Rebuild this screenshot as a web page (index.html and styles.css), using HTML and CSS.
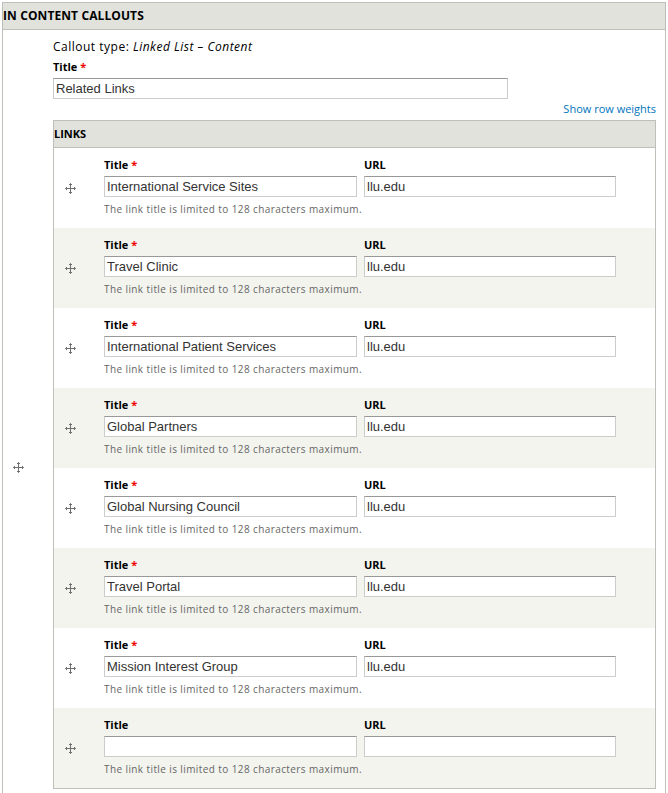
FILE: index.html
```html
<!DOCTYPE html>
<html>
<head>
<meta charset="utf-8">
<link rel="stylesheet" href="styles.css">
</head>
<body>
<div class="callouts">
  <div class="callouts-head">IN CONTENT CALLOUTS</div>
  <div class="callouts-body">
    <div class="outer-handle"><svg class="handle" viewBox="0 0 11 11"><path d="M5.5 0.5V10.5M0.5 5.5H10.5" /><path class="tip" d="M4 2L5.5 0.5L7 2M4 9L5.5 10.5L7 9M2 4L0.5 5.5L2 7M9 4L10.5 5.5L9 7"/></svg></div>
    <div class="content">
      <div class="type-line">Callout type: <em>Linked List – Content</em></div>
      <label class="lbl">Title <span class="req">*</span></label>
      <div class="input wide">Related Links</div>
      <div class="weights"><a href="#">Show row weights</a></div>
      <div class="links">
        <div class="links-head">LINKS</div>
        <div class="row">
          <div class="row-handle"><svg class="handle" viewBox="0 0 11 11"><path d="M5.5 0.5V10.5M0.5 5.5H10.5" /><path class="tip" d="M4 2L5.5 0.5L7 2M4 9L5.5 10.5L7 9M2 4L0.5 5.5L2 7M9 4L10.5 5.5L9 7"/></svg></div>
          <div class="fields">
            <div class="col"><div class="lbl">Title <span class="req">*</span></div><div class="input">International Service Sites</div><div class="desc">The link title is limited to 128 characters maximum.</div></div>
            <div class="col"><div class="lbl">URL</div><div class="input">llu.edu</div></div>
          </div>
        </div>
        <div class="row alt">
          <div class="row-handle"><svg class="handle" viewBox="0 0 11 11"><path d="M5.5 0.5V10.5M0.5 5.5H10.5" /><path class="tip" d="M4 2L5.5 0.5L7 2M4 9L5.5 10.5L7 9M2 4L0.5 5.5L2 7M9 4L10.5 5.5L9 7"/></svg></div>
          <div class="fields">
            <div class="col"><div class="lbl">Title <span class="req">*</span></div><div class="input">Travel Clinic</div><div class="desc">The link title is limited to 128 characters maximum.</div></div>
            <div class="col"><div class="lbl">URL</div><div class="input">llu.edu</div></div>
          </div>
        </div>
        <div class="row">
          <div class="row-handle"><svg class="handle" viewBox="0 0 11 11"><path d="M5.5 0.5V10.5M0.5 5.5H10.5" /><path class="tip" d="M4 2L5.5 0.5L7 2M4 9L5.5 10.5L7 9M2 4L0.5 5.5L2 7M9 4L10.5 5.5L9 7"/></svg></div>
          <div class="fields">
            <div class="col"><div class="lbl">Title <span class="req">*</span></div><div class="input">International Patient Services</div><div class="desc">The link title is limited to 128 characters maximum.</div></div>
            <div class="col"><div class="lbl">URL</div><div class="input">llu.edu</div></div>
          </div>
        </div>
        <div class="row alt">
          <div class="row-handle"><svg class="handle" viewBox="0 0 11 11"><path d="M5.5 0.5V10.5M0.5 5.5H10.5" /><path class="tip" d="M4 2L5.5 0.5L7 2M4 9L5.5 10.5L7 9M2 4L0.5 5.5L2 7M9 4L10.5 5.5L9 7"/></svg></div>
          <div class="fields">
            <div class="col"><div class="lbl">Title <span class="req">*</span></div><div class="input">Global Partners</div><div class="desc">The link title is limited to 128 characters maximum.</div></div>
            <div class="col"><div class="lbl">URL</div><div class="input">llu.edu</div></div>
          </div>
        </div>
        <div class="row">
          <div class="row-handle"><svg class="handle" viewBox="0 0 11 11"><path d="M5.5 0.5V10.5M0.5 5.5H10.5" /><path class="tip" d="M4 2L5.5 0.5L7 2M4 9L5.5 10.5L7 9M2 4L0.5 5.5L2 7M9 4L10.5 5.5L9 7"/></svg></div>
          <div class="fields">
            <div class="col"><div class="lbl">Title <span class="req">*</span></div><div class="input">Global Nursing Council</div><div class="desc">The link title is limited to 128 characters maximum.</div></div>
            <div class="col"><div class="lbl">URL</div><div class="input">llu.edu</div></div>
          </div>
        </div>
        <div class="row alt">
          <div class="row-handle"><svg class="handle" viewBox="0 0 11 11"><path d="M5.5 0.5V10.5M0.5 5.5H10.5" /><path class="tip" d="M4 2L5.5 0.5L7 2M4 9L5.5 10.5L7 9M2 4L0.5 5.5L2 7M9 4L10.5 5.5L9 7"/></svg></div>
          <div class="fields">
            <div class="col"><div class="lbl">Title <span class="req">*</span></div><div class="input">Travel Portal</div><div class="desc">The link title is limited to 128 characters maximum.</div></div>
            <div class="col"><div class="lbl">URL</div><div class="input">llu.edu</div></div>
          </div>
        </div>
        <div class="row">
          <div class="row-handle"><svg class="handle" viewBox="0 0 11 11"><path d="M5.5 0.5V10.5M0.5 5.5H10.5" /><path class="tip" d="M4 2L5.5 0.5L7 2M4 9L5.5 10.5L7 9M2 4L0.5 5.5L2 7M9 4L10.5 5.5L9 7"/></svg></div>
          <div class="fields">
            <div class="col"><div class="lbl">Title <span class="req">*</span></div><div class="input">Mission Interest Group</div><div class="desc">The link title is limited to 128 characters maximum.</div></div>
            <div class="col"><div class="lbl">URL</div><div class="input">llu.edu</div></div>
          </div>
        </div>
        <div class="row alt">
          <div class="row-handle"><svg class="handle" viewBox="0 0 11 11"><path d="M5.5 0.5V10.5M0.5 5.5H10.5" /><path class="tip" d="M4 2L5.5 0.5L7 2M4 9L5.5 10.5L7 9M2 4L0.5 5.5L2 7M9 4L10.5 5.5L9 7"/></svg></div>
          <div class="fields">
            <div class="col"><div class="lbl">Title</div><div class="input"></div><div class="desc">The link title is limited to 128 characters maximum.</div></div>
            <div class="col"><div class="lbl">URL</div><div class="input"></div></div>
          </div>
        </div>
      </div>
      <div class="after"></div>
    </div>
  </div>
</div>
</body>
</html>
```

FILE: styles.css
```css
html, body {
  margin: 0;
  padding: 0;
  background: #ffffff;
}
body {
  font-family: "Open Sans", "DejaVu Sans", sans-serif;
  color: #000;
}
.callouts {
  margin: 2px 0 0 2px;
  width: 664px;
  box-sizing: border-box;
  border: 1px solid #bebfb9;
}
.callouts-head {
  height: 26px;
  line-height: 26px;
  background: #e1e2dc;
  border-bottom: 1px solid #bebfb9;
  font-weight: bold;
  font-size: 12px;
  letter-spacing: 0.1px;
  padding-left: 0;
  color: #000;
}
.callouts-body {
  display: flex;
}
.outer-handle {
  width: 50px;
  flex: none;
  box-sizing: border-box;
  padding-left: 10px;
  display: flex;
  align-items: center;
}
.handle {
  width: 11px;
  height: 11px;
  display: block;
}
.handle path {
  fill: none;
  stroke: #6f6f6f;
  stroke-width: 1;
}
.content {
  width: 603px;
  padding-top: 10px;
}
.type-line {
  font-size: 12px;
  line-height: 14px;
  letter-spacing: 0.5px;
  color: #000;
}
.type-line em {
  font-style: italic;
}
.lbl {
  display: block;
  font-size: 11px;
  font-weight: bold;
  line-height: 14px;
  color: #000;
}
.content > .lbl {
  margin-top: 6px;
}
.req {
  color: #e00;
}
.input {
  box-sizing: border-box;
  height: 21px;
  border: 1px solid #ccc;
  border-top-color: #999;
  background: #fff;
  font-family: "Liberation Sans", Arial, sans-serif;
  font-size: 13px;
  line-height: 19px;
  padding-left: 2px;
  color: #333;
  margin-top: 4px;
  white-space: nowrap;
  overflow: hidden;
}
.input.wide {
  width: 455px;
}
.weights {
  text-align: right;
  font-size: 11px;
  line-height: 14px;
  margin-top: 3px;
}
.weights a {
  color: #0074bd;
  text-decoration: none;
}
.links {
  margin-top: 4px;
  border: 1px solid #bebfb9;
}
.links-head {
  height: 26px;
  line-height: 26px;
  background: #e1e2dc;
  border-bottom: 1px solid #bebfb9;
  font-weight: bold;
  font-size: 11px;
  padding-left: 0;
}
.row {
  display: flex;
  height: 80px;
  box-sizing: border-box;
  background: #fff;
}
.row.alt {
  background: #f3f4ee;
}
.row-handle {
  width: 50px;
  flex: none;
  box-sizing: border-box;
  padding-left: 11px;
  display: flex;
  align-items: center;
}
.fields {
  display: flex;
  gap: 7px;
  padding-top: 10px;
}
.col {
  width: 253px;
}
.col + .col {
  width: 252px;
}
.desc {
  font-size: 10px;
  line-height: 14px;
  letter-spacing: 0.4px;
  color: #666;
  margin-top: 5px;
  white-space: nowrap;
}
.after {
  height: 116px;
}
```
